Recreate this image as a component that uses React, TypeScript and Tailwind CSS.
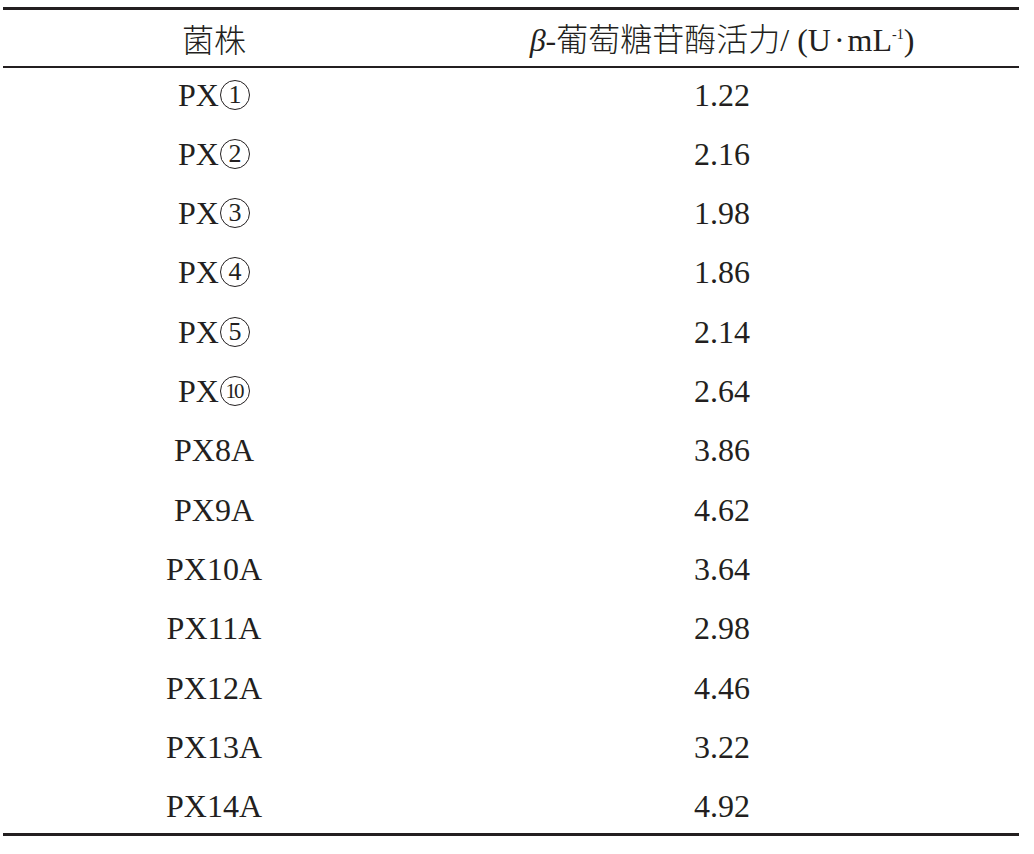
import React from "react";

type Row = { name: string; circ?: string; val: string };

const rows: Row[] = [
  { name: "PX", circ: "1", val: "1.22" },
  { name: "PX", circ: "2", val: "2.16" },
  { name: "PX", circ: "3", val: "1.98" },
  { name: "PX", circ: "4", val: "1.86" },
  { name: "PX", circ: "5", val: "2.14" },
  { name: "PX", circ: "10", val: "2.64" },
  { name: "PX8A", val: "3.86" },
  { name: "PX9A", val: "4.62" },
  { name: "PX10A", val: "3.64" },
  { name: "PX11A", val: "2.98" },
  { name: "PX12A", val: "4.46" },
  { name: "PX13A", val: "3.22" },
  { name: "PX14A", val: "4.92" },
];

export default function App() {
  return (
    <div className="w-[1034px] h-[854px] bg-white pt-[7px] pl-[3px] text-[#231f20]">
      <div className="w-[1016px]">
        <div className="h-[3px] bg-[#231f20]" />
        <div className="flex h-[56px] items-center">
          <div className="w-[422px] text-center text-[32px] leading-none font-['Noto_Sans_CJK_SC',sans-serif] font-light">
            菌株
          </div>
          <div className="flex-1 text-center text-[32px] leading-none whitespace-nowrap">
            <span className="font-['Liberation_Serif',serif] italic">β</span>
            <span className="font-['Liberation_Serif',serif]">-</span>
            <span className="font-['Noto_Sans_CJK_SC',sans-serif] font-light">葡萄糖苷酶活力</span>
            <span className="font-['Liberation_Serif',serif]">/ (U</span>
            <span className="font-['Liberation_Serif',serif] mx-[3px]">·</span>
            <span className="font-['Liberation_Serif',serif]">mL</span>
            <span className="font-['Liberation_Serif',serif] text-[14px] relative -top-[12px]">-1</span>
            <span className="font-['Liberation_Serif',serif]">)</span>
          </div>
        </div>
        <div className="h-[2px] bg-[#231f20]" />
        <div className="flex h-[765px] flex-col justify-between">
          {rows.map((r, i) => (
            <div
              key={i}
              className="flex h-[53px] items-center text-[32px] leading-none font-['Liberation_Serif',serif]"
            >
              <div className="w-[422px] flex items-center justify-center">
                <span>{r.name}</span>
                {r.circ && (
                  <span
                    className={`ml-[1px] flex h-[30px] w-[30px] shrink-0 items-center justify-center rounded-full border-[1.5px] border-[#231f20] leading-none ${
                      r.circ.length > 1 ? "text-[21px] tracking-[-2px] pr-[2px]" : "text-[26px]"
                    }`}
                  >
                    {r.circ}
                  </span>
                )}
              </div>
              <div className="flex-1 text-center">{r.val}</div>
            </div>
          ))}
        </div>
        <div className="h-[3px] bg-[#231f20]" />
      </div>
    </div>
  );
}
